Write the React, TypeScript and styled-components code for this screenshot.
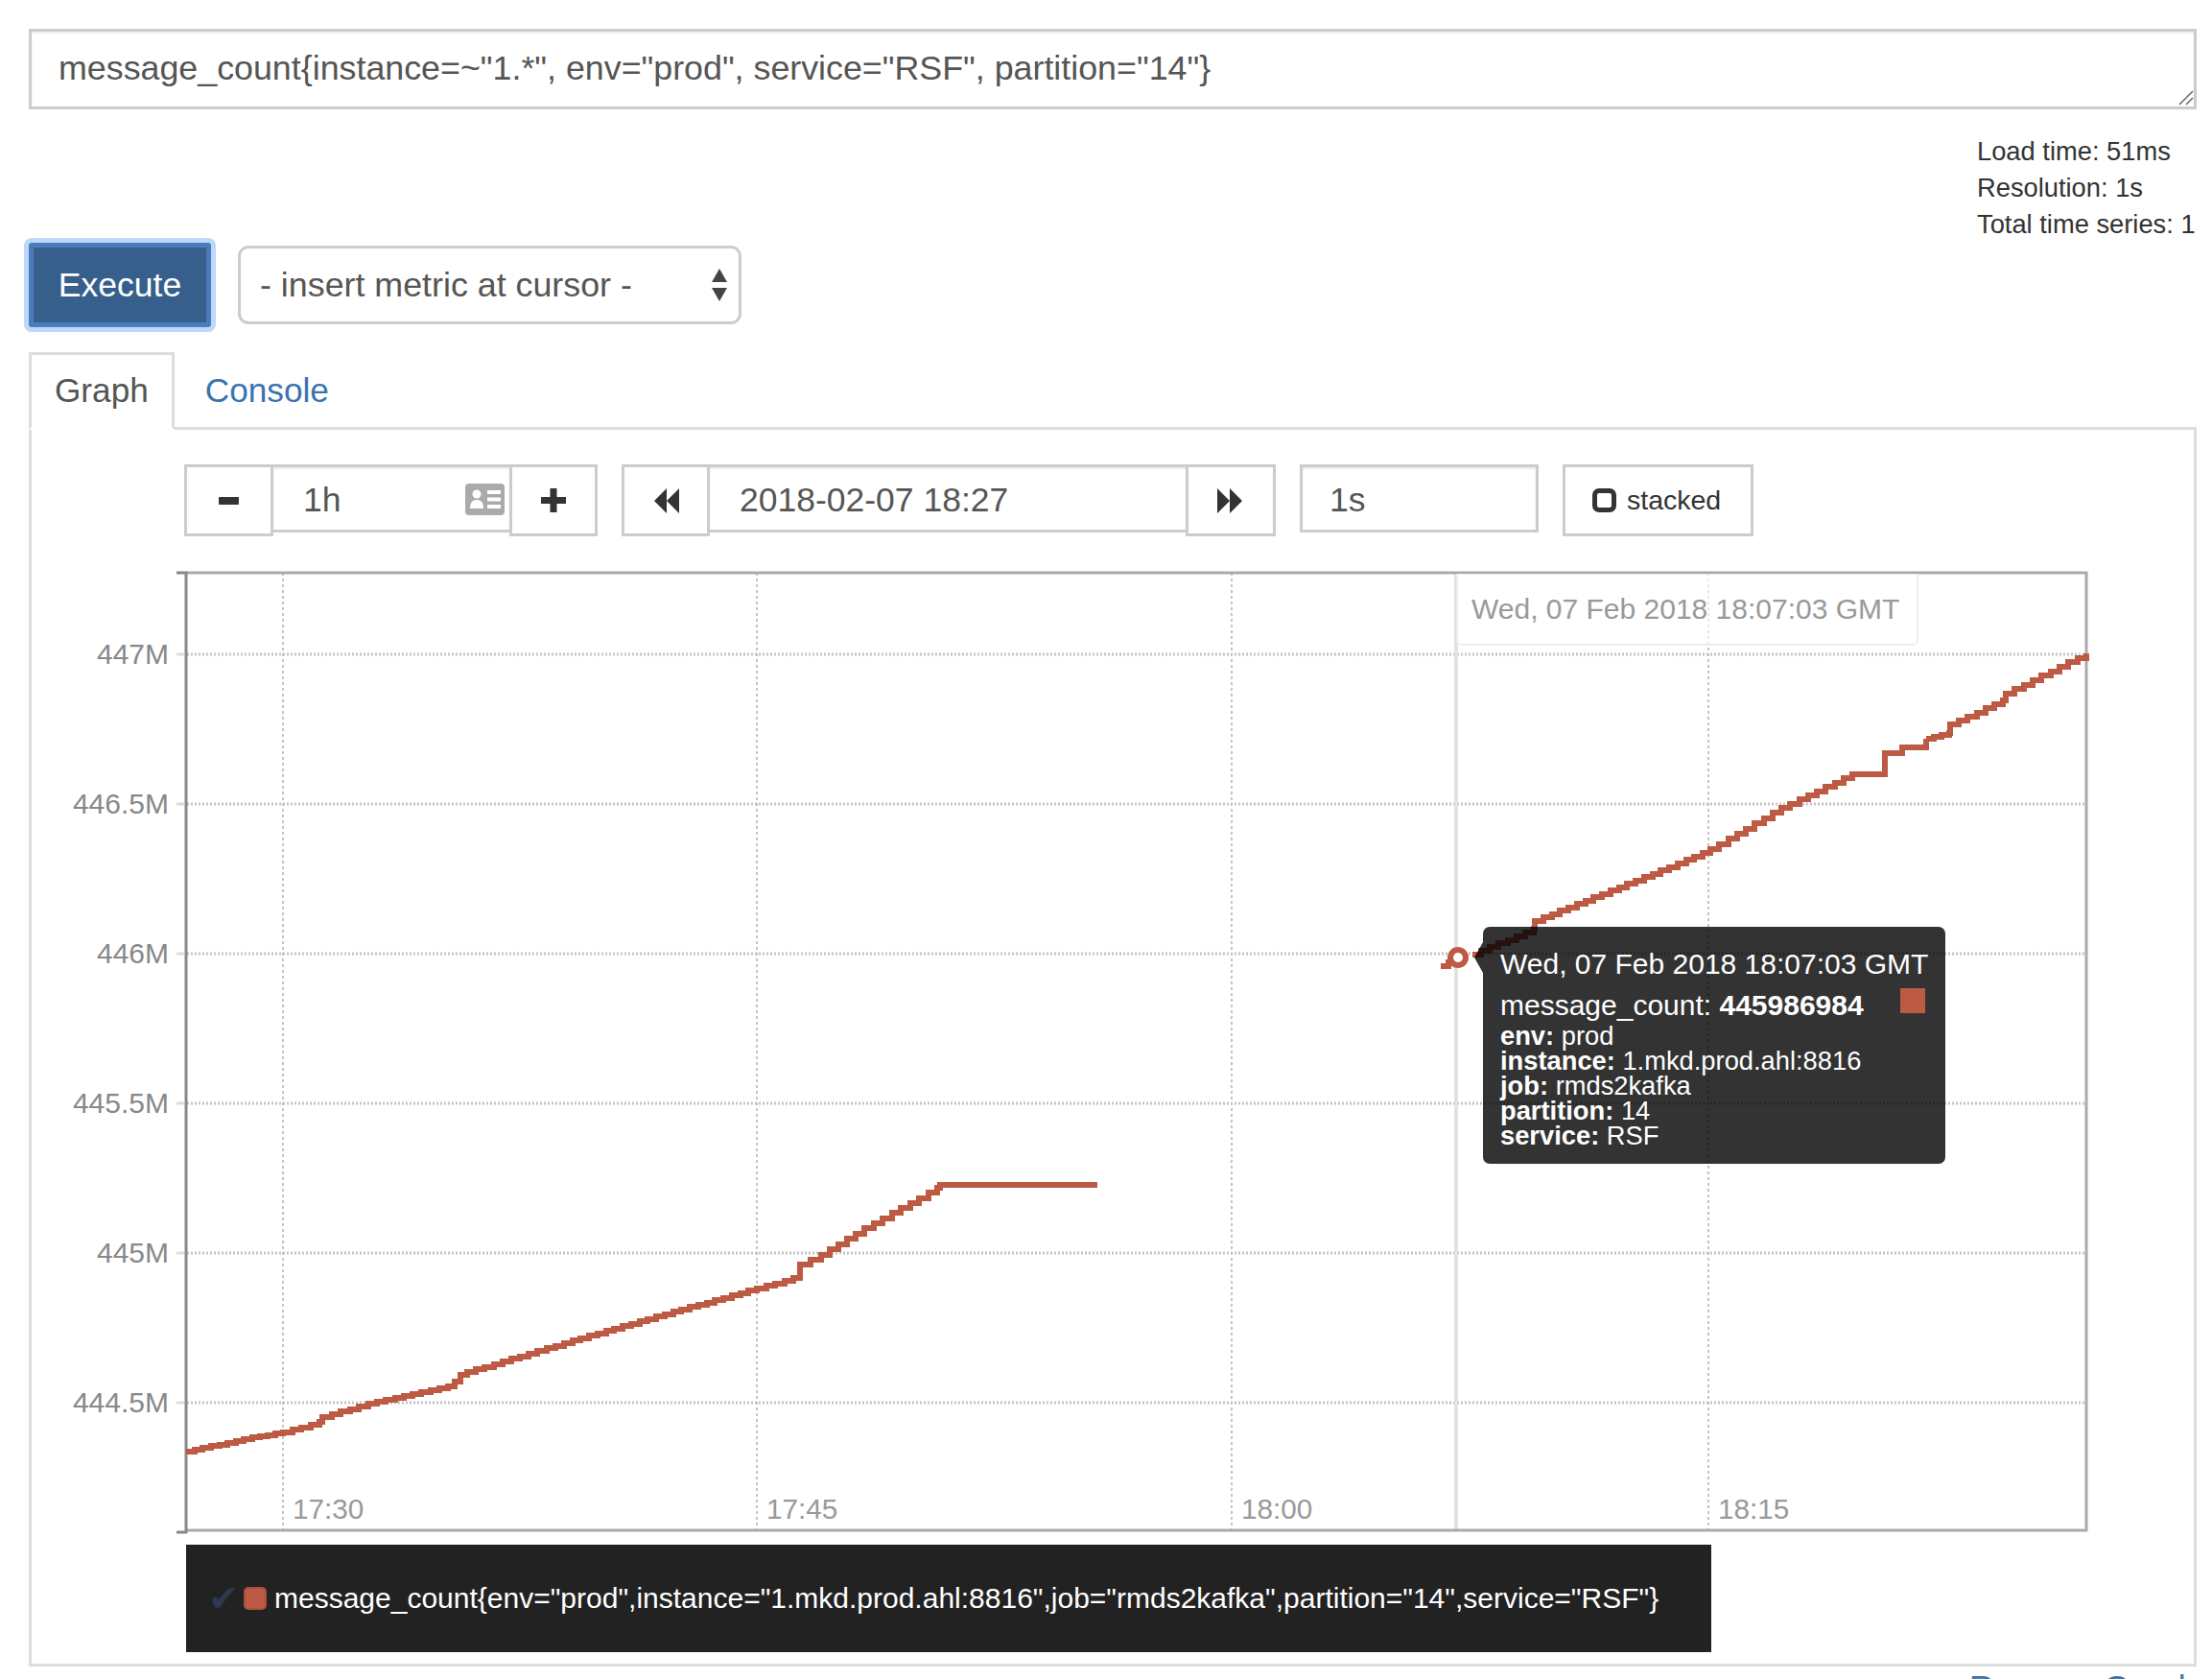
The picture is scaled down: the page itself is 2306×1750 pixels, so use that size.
import styled, { createGlobalStyle } from "styled-components"

const GlobalStyle = createGlobalStyle`
  html, body {
    margin: 0;
    height: 1750px;
    overflow: hidden;
    background: #fff;
    color: #333;
    font-family: "Liberation Sans", Arial, sans-serif;
  }
`

const LINE = "#bd5a43"

// chart drawing uses page coordinates, the svg viewBox starts at CHART_X / CHART_Y
const CHART_X = 60
const CHART_Y = 590

const segmentA: number[][] = [
  [194, 1513], [263, 1498], [295, 1493], [333, 1482], [336, 1477], [384, 1463], [467, 1445],
  [474, 1440], [480, 1433], [487, 1430], [588, 1400], [684, 1372], [789, 1343], [827, 1332],
  [834, 1318], [856, 1308], [901, 1280], [977, 1238], [980, 1235],
]

const segmentB: number[][] = [
  [1535, 995], [1599, 968], [1600, 960], [1749, 900], [1783, 885], [1857, 842], [1931, 807],
]

const segmentC: number[][] = [
  [2008, 770], [2032, 764], [2033, 755], [2088, 730], [2091, 723], [2175, 681],
]

function stairs(points: number[][], step = 9) {
  let d = `M${points[0][0]} ${points[0][1]}`
  for (let i = 0; i < points.length - 1; i++) {
    const [x0, y0] = points[i]
    const [x1, y1] = points[i + 1]
    const n = Math.max(1, Math.round((x1 - x0) / step))
    for (let k = 1; k <= n; k++) {
      const x = Math.round(x0 + ((x1 - x0) * k) / n)
      const y = Math.round(y0 + ((y1 - y0) * k) / n)
      d += `H${x}V${y}`
    }
  }
  return d
}

const linePath = [
  stairs(segmentA),
  "H1144",
  "M1502 1007H1510V1003H1520V998",
  stairs(segmentB),
  "H1965V785H1983V779H2008V770",
  stairs(segmentC),
].join(" ")

const yTicks = [
  { y: 682, label: "447M" },
  { y: 838, label: "446.5M" },
  { y: 994, label: "446M" },
  { y: 1150, label: "445.5M" },
  { y: 1306, label: "445M" },
  { y: 1462, label: "444.5M" },
]

const xTicks = [
  { x: 295, label: "17:30" },
  { x: 789, label: "17:45" },
  { x: 1284, label: "18:00" },
  { x: 1781, label: "18:15" },
]

const details = [
  { key: "env", value: "prod" },
  { key: "instance", value: "1.mkd.prod.ahl:8816" },
  { key: "job", value: "rmds2kafka" },
  { key: "partition", value: "14" },
  { key: "service", value: "RSF" },
]

function CardIcon() {
  return (
    <svg width="41" height="33" viewBox="0 0 41 33">
      <rect width="41" height="33" rx="4" fill="#aaa" />
      <circle cx="12" cy="11" r="4.5" fill="#fff" />
      <path d="M5 26c0-7 3-9 7-9s7 2 7 9z" fill="#fff" />
      <path d="M23 7h14v4H23zM23 14.500h14v4H23zM23 22h14v4H23z" fill="#fff" />
    </svg>
  )
}

function Minus() {
  return (
    <svg width="21" height="8" viewBox="0 0 21 8">
      <rect width="21" height="8" rx="1" fill="#333" />
    </svg>
  )
}

function Plus() {
  return (
    <svg width="26" height="25" viewBox="0 0 26 25">
      <path d="M9.500 0h7v9H26v7h-9.500v9h-7v-9H0V9h9.500z" fill="#333" />
    </svg>
  )
}

function Rewind() {
  return (
    <svg width="26" height="26" viewBox="0 0 26 26">
      <path d="M0 13L13 0v26zM13 13L26 0v26z" fill="#333" />
    </svg>
  )
}

function Forward() {
  return (
    <svg width="26" height="26" viewBox="0 0 26 26">
      <path d="M26 13L13 0v26zM13 13L0 0v26z" fill="#333" />
    </svg>
  )
}

function UpDown() {
  return (
    <svg width="18" height="34" viewBox="0 0 18 34">
      <path d="M9 0l8 14H1zM9 34L1 20h16z" fill="#444" />
    </svg>
  )
}

function Grip() {
  return (
    <svg width="16" height="16" viewBox="0 0 16 16">
      <path d="M1 15L15 1M8 15l7-7" stroke="#666" strokeWidth="1.500" fill="none" />
    </svg>
  )
}

function Chart() {
  return (
    <svg width="2120" height="1010" viewBox={`${CHART_X} ${CHART_Y} 2120 1010`} style={{ display: "block" }}>
      {yTicks.map(t => (
        <g key={t.label}>
          <path d={`M184 ${t.y}H192`} stroke="#ddd" strokeWidth="3" />
          <path d={`M195 ${t.y}H2175`} stroke="#c4c4c4" strokeWidth="3" strokeDasharray="2 2" />
          <text x="176" y={t.y + 10} textAnchor="end" fontSize="30" fill="#888">
            {t.label}
          </text>
        </g>
      ))}
      {xTicks.map(t => (
        <g key={t.label}>
          <path d={`M${t.x} 597V1595`} stroke="#c4c4c4" strokeWidth="2" strokeDasharray="3 3" />
          <text x={t.x + 10} y="1583" fontSize="29.700" fill="#999">
            {t.label}
          </text>
        </g>
      ))}
      <path d="M1518 597V1595" stroke="#e2e2e2" strokeWidth="4" />
      <path d="M194 597H2175V1595H194" fill="none" stroke="#aaa" strokeWidth="3" />
      <path d="M184 597H194V1597H184" fill="none" stroke="#888" strokeWidth="3" />
      <path d={linePath} fill="none" stroke={LINE} strokeWidth="6" />
      <circle cx="1520" cy="998" r="8" fill="#fff" stroke={LINE} strokeWidth="6" />
    </svg>
  )
}

export default function App() {
  return (
    <Page>
      <GlobalStyle />
      <QueryWrap>
        <QueryInput readOnly rows={1} defaultValue={'message_count{instance=~"1.*", env="prod", service="RSF", partition="14"}'} />
        <QueryGrip>
          <Grip />
        </QueryGrip>
      </QueryWrap>
      <Stats>
        <div>Load time: 51ms</div>
        <div>Resolution: 1s</div>
        <div>Total time series: 1</div>
      </Stats>
      <ActionRow>
        <ExecuteButton>Execute</ExecuteButton>
        <MetricSelect>
          <span>- insert metric at cursor -</span>
          <UpDown />
        </MetricSelect>
      </ActionRow>
      <Tabs>
        <Tab $active>Graph</Tab>
        <Tab>Console</Tab>
      </Tabs>
      <Panel>
        <Controls>
          <ControlGroup>
            <IconButton $width={93}>
              <Minus />
            </IconButton>
            <TextField $width={246}>
              1h
              <FieldIcon>
                <CardIcon />
              </FieldIcon>
            </TextField>
            <IconButton $width={92} $shift={-1}>
              <Plus />
            </IconButton>
          </ControlGroup>
          <ControlGroup>
            <IconButton $width={92} $shift={2}>
              <Rewind />
            </IconButton>
            <TextField $width={496}>2018-02-07 18:27</TextField>
            <IconButton $width={94} $shift={-3}>
              <Forward />
            </IconButton>
          </ControlGroup>
          <TextField $width={249} $boxed>
            1s
          </TextField>
          <StackedButton>
            <StackedBox />
            stacked
          </StackedButton>
        </Controls>
        <ChartArea>
          <Chart />
          <HoverDate>Wed, 07 Feb 2018 18:07:03 GMT</HoverDate>
          <Tooltip>
            <TooltipTitle>Wed, 07 Feb 2018 18:07:03 GMT</TooltipTitle>
            <TooltipValue>
              message_count: <b>445986984</b>
              <TooltipSwatch />
            </TooltipValue>
            {details.map(d => (
              <TooltipDetail key={d.key}>
                <b>{d.key}:</b> {d.value}
              </TooltipDetail>
            ))}
          </Tooltip>
        </ChartArea>
        <Legend>
          <LegendCheck>✔</LegendCheck>
          <LegendSwatch />
          {'message_count{env="prod",instance="1.mkd.prod.ahl:8816",job="rmds2kafka",partition="14",service="RSF"}'}
        </Legend>
      </Panel>
      <RemoveLink>Remove Graph</RemoveLink>
    </Page>
  )
}

const Page = styled.div`
  display: flex;
  flex-direction: column;
  box-sizing: border-box;
  width: 2306px;
  height: 1750px;
  padding: 30px 16px 0 30px;
  overflow: hidden;
`

const QueryWrap = styled.div`
  position: relative;
  flex: none;
  height: 84px;
`

const QueryInput = styled.textarea`
  display: block;
  box-sizing: border-box;
  width: 100%;
  height: 84px;
  padding: 13px 28px;
  border: 3px solid #ccc;
  border-radius: 0;
  outline: none;
  resize: none;
  color: #555;
  font-family: inherit;
  font-size: 35.800px;
  line-height: 50px;
  box-shadow: inset 0 2px 2px rgba(0, 0, 0, 0.075);
`

const QueryGrip = styled.span`
  position: absolute;
  right: 3px;
  bottom: 4px;
  display: flex;
`

const Stats = styled.div`
  align-self: flex-end;
  width: 229px;
  margin-top: 25px;
  font-size: 27.300px;
  line-height: 38px;
  white-space: nowrap;
`

const ActionRow = styled.div`
  display: flex;
  align-items: center;
  height: 88px;
`

const ExecuteButton = styled.div`
  display: grid;
  place-items: center;
  box-sizing: border-box;
  width: 190px;
  height: 88px;
  margin-right: 28px;
  border: 5px solid #4a7cbd;
  border-radius: 3px;
  background: #365f8c;
  color: #fff;
  font-size: 35.500px;
  box-shadow: 0 0 0 5px #bcd9fb;
`

const MetricSelect = styled.div`
  display: flex;
  align-items: center;
  justify-content: space-between;
  box-sizing: border-box;
  width: 525px;
  height: 82px;
  padding: 0 11px 0 20px;
  border: 3px solid #ccc;
  border-radius: 11px;
  color: #555;
  font-size: 35.800px;
`

const Tabs = styled.div`
  display: flex;
  flex: none;
  height: 78px;
  margin-top: 26px;
  border-bottom: 3px solid #ddd;
`

const Tab = styled.div<{ $active?: boolean }>`
  box-sizing: border-box;
  height: 81px;
  margin-left: ${p => (p.$active ? 0 : 5)}px;
  padding: 17px 24px 0;
  border: 3px solid ${p => (p.$active ? "#ddd" : "transparent")};
  border-bottom-color: ${p => (p.$active ? "#fff" : "transparent")};
  background: ${p => (p.$active ? "#fff" : "transparent")};
  color: ${p => (p.$active ? "#555" : "#3b72b0")};
  font-size: 35.200px;
`

const Panel = styled.div`
  flex: none;
  box-sizing: border-box;
  height: 1289px;
  padding-top: 36px;
  border: 3px solid #ddd;
  border-top: none;
`

const Controls = styled.div`
  display: flex;
  align-items: flex-start;
  gap: 25px;
  height: 75px;
  padding-left: 159px;
`

const ControlGroup = styled.div`
  display: flex;
  align-items: flex-start;
`

const IconButton = styled.div<{ $width: number; $shift?: number }>`
  display: grid;
  place-items: center;
  flex: none;
  box-sizing: border-box;
  width: ${p => p.$width}px;
  height: 75px;
  padding-left: ${p => Math.max(p.$shift ?? 0, 0)}px;
  padding-right: ${p => Math.max(-(p.$shift ?? 0), 0)}px;
  border: 3px solid #ccc;
  background: #fff;
`

const TextField = styled.div<{ $width: number; $boxed?: boolean }>`
  position: relative;
  display: flex;
  align-items: center;
  flex: none;
  box-sizing: border-box;
  width: ${p => p.$width}px;
  height: 71px;
  padding: 4px 0 0 ${p => (p.$boxed ? 28 : 31)}px;
  border: 3px solid #ccc;
  border-left-width: ${p => (p.$boxed ? 3 : 0)}px;
  border-right-width: ${p => (p.$boxed ? 3 : 0)}px;
  color: #555;
  font-size: 35.500px;
  box-shadow: inset 0 2px 2px rgba(0, 0, 0, 0.075);
`

const FieldIcon = styled.span`
  position: absolute;
  top: 17px;
  right: 5px;
  display: flex;
`

const StackedButton = styled.div`
  display: flex;
  align-items: center;
  box-sizing: border-box;
  width: 199px;
  height: 75px;
  padding-left: 28px;
  border: 3px solid #ccc;
  color: #333;
  font-size: 28.500px;
`

const StackedBox = styled.span`
  box-sizing: border-box;
  width: 25px;
  height: 25px;
  margin-right: 11px;
  border: 5px solid #333;
  border-radius: 7px;
`

const ChartArea = styled.div`
  position: relative;
  width: 2120px;
  height: 1010px;
  margin: 31px 0 0 27px;
`

const HoverDate = styled.div`
  position: absolute;
  left: ${1518 - CHART_X}px;
  top: ${598 - CHART_Y}px;
  box-sizing: border-box;
  width: 482px;
  height: 75px;
  padding: 20px 0 0 14px;
  border: 2px solid #eee;
  border-top: none;
  border-radius: 0 0 6px 6px;
  background: rgba(255, 255, 255, 0.6);
  color: #999;
  font-size: 30px;
  line-height: 34px;
  white-space: nowrap;
`

const Tooltip = styled.div`
  position: absolute;
  left: ${1546 - CHART_X}px;
  top: ${966 - CHART_Y}px;
  box-sizing: border-box;
  width: 482px;
  height: 247px;
  padding: 21px 0 0 18px;
  border-radius: 7px;
  background: rgba(0, 0, 0, 0.8);
  color: #fff;
  white-space: nowrap;

  &::before {
    content: "";
    position: absolute;
    left: -9px;
    top: 16px;
    border-style: solid;
    border-width: 16px 9px 16px 0;
    border-color: transparent rgba(0, 0, 0, 0.8) transparent transparent;
  }
`

const TooltipTitle = styled.div`
  font-size: 30px;
  line-height: 36px;
`

const TooltipValue = styled.div`
  position: relative;
  margin: 7px 0 1px;
  font-size: 30px;
  line-height: 36px;
`

const TooltipSwatch = styled.span`
  position: absolute;
  left: 417px;
  top: 0;
  width: 26px;
  height: 26px;
  background: ${LINE};
`

const TooltipDetail = styled.div`
  font-size: 27.300px;
  line-height: 26px;
`

const Legend = styled.div`
  display: flex;
  align-items: center;
  box-sizing: border-box;
  width: 1590px;
  height: 112px;
  margin: 10px 0 0 161px;
  padding-left: 23px;
  background: #222;
  color: #fff;
  font-size: 30px;
  white-space: nowrap;
`

const LegendCheck = styled.span`
  width: 37px;
  color: #2b3a4e;
  font-family: "DejaVu Sans", sans-serif;
  font-size: 38px;
`

const LegendSwatch = styled.span`
  box-sizing: border-box;
  width: 24px;
  height: 24px;
  margin-right: 8px;
  border: 2px solid #a8523e;
  border-radius: 5px;
  background: ${LINE};
`

const RemoveLink = styled.div`
  margin: -3px 0 0 2023px;
  color: #3b72b0;
  font-size: 35px;
  line-height: 50px;
  white-space: nowrap;
`
